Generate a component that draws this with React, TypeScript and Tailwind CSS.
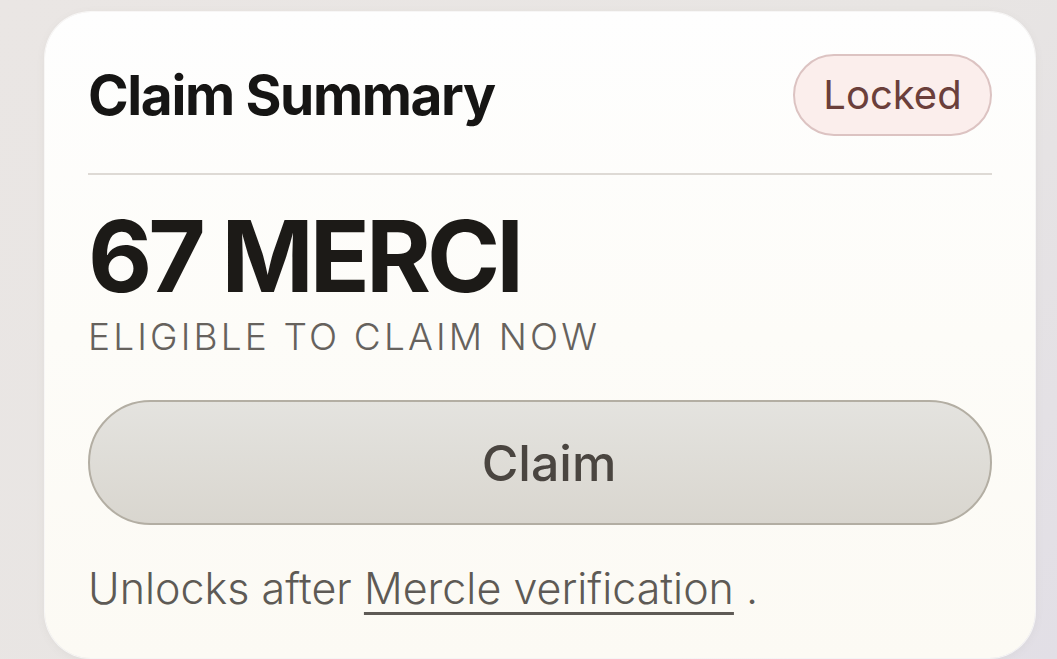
export default function App() {
  return (
    <div
      className="w-[1057px] h-[659px] overflow-hidden bg-[linear-gradient(135deg,#eae6e4_0%,#e8e5e3_55%,#e2dfe6_100%)] pl-[45px] pt-[12px]"
      style={{ fontFamily: "Inter, 'Noto Sans', sans-serif" }}
    >
      <div className="w-[990px] h-[646px] rounded-[46px] bg-[linear-gradient(180deg,#fefefe_0%,#fdfcf8_50%,#fcfaf4_100%)] px-[43px] pt-[42px] flex flex-col shadow-[0_0_0_1px_rgba(255,255,255,0.7),0_2px_10px_rgba(120,110,100,0.08)]">
        <div className="flex items-center justify-between h-[82px]">
          <h1 className="text-[55px] leading-none font-bold text-[#161514] tracking-[-0.025em]">Claim Summary</h1>
          <span className="h-[82px] w-[199px] rounded-full border-2 border-[#dcc3c2] bg-[#fbeeec] text-[40px] leading-none text-[#6b3f3b] flex items-center justify-center">
            Locked
          </span>
        </div>
        <div className="mt-[37px] h-[2px] bg-[#dedad5]" />
        <div className="mt-[32px] text-[99px] leading-none font-bold text-[#1c1a17] tracking-[-0.04em]">67 MERCI</div>
        <div className="mt-[12px] text-[37px] leading-none text-[#66625d] tracking-[0.085em] font-light">ELIGIBLE TO CLAIM NOW</div>
        <button className="mt-[45px] h-[125px] w-full rounded-full border-2 border-[#b3aea3] bg-[linear-gradient(180deg,#e4e3df_0%,#d9d6cf_100%)] pl-[18px] text-[50px] leading-none font-medium text-[#4a4540]">
          Claim
        </button>
        <div className="mt-[42px] text-[43px] leading-none text-[#5e5a55] font-light">
          Unlocks after{" "}
          <span className="underline decoration-[3px] underline-offset-[8px]">Mercle verification</span> .
        </div>
      </div>
    </div>
  );
}
